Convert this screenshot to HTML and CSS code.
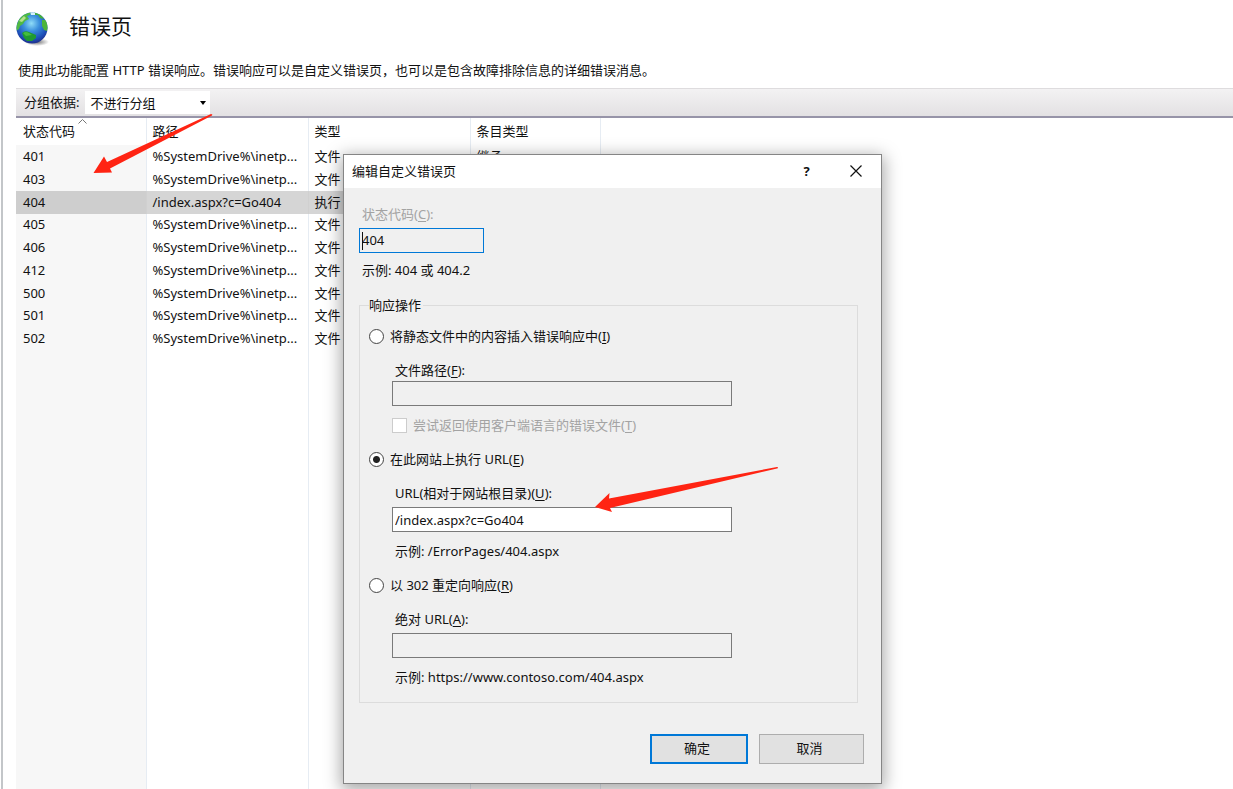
FILE: index.html
```html
<!DOCTYPE html>
<html lang="zh-CN">
<head>
  <meta charset="UTF-8">
  <meta name="viewport" content="width=device-width, initial-scale=1.0">
  <title>错误页</title>
  <link rel="stylesheet" href="styles.css">
</head>
<body>
  <main class="page">
    <header class="page-header">
      <svg class="globe" viewBox="0 0 34 36" aria-hidden="true">
        <defs>
          <radialGradient id="sea" cx="48%" cy="35%" r="65%">
            <stop offset="0" stop-color="#8fdcf7"/>
            <stop offset="0.4" stop-color="#3a8fdd"/>
            <stop offset="0.8" stop-color="#1c4fb8"/>
            <stop offset="1" stop-color="#20308c"/>
          </radialGradient>
          <radialGradient id="shade">
            <stop offset="0" stop-color="#777"/>
            <stop offset="1" stop-color="#777" stop-opacity="0"/>
          </radialGradient>
          <clipPath id="ball"><circle cx="16" cy="17" r="15.5"/></clipPath>
        </defs>
        <ellipse cx="21" cy="31" rx="12" ry="4" fill="url(#shade)"/>
        <circle cx="16" cy="17" r="15.5" fill="url(#sea)"/>
        <g clip-path="url(#ball)">
          <path d="M0 16 L3 8 Q8 2 15 1 L14 4 L11 5 L13 8 L9 10 L7 13 L4 15 L3 18 L0 20Z" fill="#4fb944"/>
          <path d="M3 10 L8 5 L10 7 L6 11Z" fill="#b5e08a"/>
          <path d="M18 1 L25 3 L28 8 L24 7 L22 4 L18 4Z" fill="#45ae3c"/>
          <path d="M26 9 L30 9 L33 15 L31 20 L28 19 L26 15Z" fill="#4db53b"/>
          <path d="M6 22 Q9 19 13 21 L20 24 L20 27 L16 30 L11 30 L8 27Z" fill="#1f9a31"/>
          <path d="M7 22 Q10 20 13 22 L16 24 L10 25Z" fill="#46bd3f"/>
          <path d="M14 0 h5 v4 h-4z" fill="#d5f0fb"/>
        </g>
      </svg>
      <h1>错误页</h1>
    </header>
    <p class="description">使用此功能配置 HTTP 错误响应。错误响应可以是自定义错误页，也可以是包含故障排除信息的详细错误消息。</p>

    <div class="toolbar">
      <label for="groupBy">分组依据:</label>
      <select id="groupBy">
        <option>不进行分组</option>
      </select>
    </div>

    <table class="error-list">
      <thead>
        <tr>
          <th>状态代码
            <svg class="sort-mark" viewBox="0 0 9 5" aria-hidden="true"><path d="M0.5 4.5 L4.5 0.5 L8.5 4.5" fill="none" stroke="#777"/></svg>
          </th>
          <th>路径</th>
          <th>类型</th>
          <th>条目类型</th>
          <th></th>
        </tr>
      </thead>
      <tbody>
        <tr><td>401</td><td>%SystemDrive%\inetp...</td><td>文件</td><td>继承</td><td></td></tr>
        <tr><td>403</td><td>%SystemDrive%\inetp...</td><td>文件</td><td></td><td></td></tr>
        <tr class="selected"><td>404</td><td>/index.aspx?c=Go404</td><td>执行</td><td></td><td></td></tr>
        <tr><td>405</td><td>%SystemDrive%\inetp...</td><td>文件</td><td></td><td></td></tr>
        <tr><td>406</td><td>%SystemDrive%\inetp...</td><td>文件</td><td></td><td></td></tr>
        <tr><td>412</td><td>%SystemDrive%\inetp...</td><td>文件</td><td></td><td></td></tr>
        <tr><td>500</td><td>%SystemDrive%\inetp...</td><td>文件</td><td></td><td></td></tr>
        <tr><td>501</td><td>%SystemDrive%\inetp...</td><td>文件</td><td></td><td></td></tr>
        <tr><td>502</td><td>%SystemDrive%\inetp...</td><td>文件</td><td></td><td></td></tr>
        <tr class="filler"><td></td><td></td><td></td><td></td><td></td></tr>
      </tbody>
    </table>
  </main>

  <form class="dialog" role="dialog" aria-labelledby="dialogTitle">
    <div class="title-bar">
      <h2 id="dialogTitle">编辑自定义错误页</h2>
      <button type="button" class="title-button" aria-label="帮助">?</button>
      <button type="button" class="title-button" aria-label="关闭">
        <svg viewBox="0 0 12 12" aria-hidden="true"><path d="M0.5 0.5 L11.5 11.5 M11.5 0.5 L0.5 11.5" stroke="#111" stroke-width="1.2"/></svg>
      </button>
    </div>

    <div class="dialog-body">
      <div class="status">
        <label class="disabled" for="statusCode">状态代码(<u>C</u>):</label>
        <input type="text" id="statusCode" value="404" readonly>
        <p>示例: 404 或 404.2</p>
      </div>

      <fieldset>
        <legend>响应操作</legend>

        <div class="option">
          <label class="choice"><input type="radio" name="action"><span>将静态文件中的内容插入错误响应中(<u>I</u>)</span></label>
          <div class="field field-file">
            <label for="filePath">文件路径(<u>F</u>):</label>
            <input type="text" id="filePath" disabled>
            <label class="choice disabled"><input type="checkbox" disabled><span>尝试返回使用客户端语言的错误文件(<u>T</u>)</span></label>
          </div>
        </div>

        <div class="option">
          <label class="choice"><input type="radio" name="action" checked><span>在此网站上执行 URL(<u>E</u>)</span></label>
          <div class="field">
            <label for="siteUrl">URL(相对于网站根目录)(<u>U</u>):</label>
            <input type="text" id="siteUrl" value="/index.aspx?c=Go404">
            <p>示例: /ErrorPages/404.aspx</p>
          </div>
        </div>

        <div class="option">
          <label class="choice"><input type="radio" name="action"><span>以 302 重定向响应(<u>R</u>)</span></label>
          <div class="field">
            <label for="absUrl">绝对 URL(<u>A</u>):</label>
            <input type="text" id="absUrl" disabled>
            <p>示例: https://www.contoso.com/404.aspx</p>
          </div>
        </div>
      </fieldset>

      <div class="actions">
        <button type="submit" class="ok">确定</button>
        <button type="button" class="cancel">取消</button>
      </div>
    </div>
  </form>

  <svg class="arrow arrow-list" viewBox="0 0 120 60" aria-hidden="true">
    <path d="M0.5 60 L11 43.5 L14 49 L118 1 Q120 1 119 2.5 L17 55.5 L19 59.5Z" fill="#ff2413"/>
  </svg>
  <svg class="arrow arrow-url" viewBox="0 0 184 46" aria-hidden="true">
    <path d="M0 41 L14.5 27 L14 32.5 L182 1 Q184 1.5 182 2.5 L15 42 L17 46Z" fill="#ff2413"/>
  </svg>
</body>
</html>
```

FILE: styles.css
```css
* {
  box-sizing: border-box;
}

body {
  margin: 0;
  min-height: 100vh;
  overflow: hidden;
  background-color: white;
  color: #111;
  font-family: "Noto Sans", "Noto Sans CJK SC", sans-serif;
  font-size: 13px;
  line-height: 18px;
}

h1, h2, p {
  margin: 0;
  font-weight: normal;
}

input, select, button {
  font: inherit;
  color: inherit;
}

/* 主页面 */
.page {
  min-height: 100vh;
  margin-left: 1px;
  padding-left: 13px;
  border-left: 2px solid #c3c6c9;
}

.page-header {
  display: flex;
  align-items: center;
  gap: 19px;
  height: 54px;
}

.globe {
  width: 34px;
  height: 36px;
  margin-top: 4px;
}

.page-header h1 {
  padding-bottom: 2px;
  font-size: 21px;
  line-height: 30px;
}

.description {
  padding: 7px 2px 9px;
}

.toolbar {
  display: flex;
  align-items: center;
  height: 30px;
  padding-left: 8px;
  border-top: 1px solid #dedcde;
  border-bottom: 2px solid #9794a8;
  background: linear-gradient(#f3f2f3, #e3e1e3);
}

.toolbar label {
  padding-bottom: 1px;
}

.toolbar select {
  width: 125px;
  height: 23px;
  margin-left: 6px;
  padding: 0 5px;
  border: none;
  border-radius: 0;
  appearance: none;
  background: white url("data:image/svg+xml,%3Csvg xmlns='http://www.w3.org/2000/svg' width='6' height='4'%3E%3Cpath d='M0 0h6L3 4z'/%3E%3C/svg%3E") no-repeat right 4px center;
}

.error-list {
  width: 100%;
  height: calc(100vh - 118px);
  table-layout: fixed;
  border-collapse: collapse;
}

.error-list th,
.error-list td {
  padding: 0 6px 2px;
  border-right: 1px solid #e6ecf3;
  font-weight: normal;
  text-align: left;
  white-space: nowrap;
  overflow: hidden;
}

.error-list th {
  position: relative;
  width: 162px;
  height: 27px;
}

.error-list th:first-child,
.error-list th:nth-child(4) {
  width: 130px;
}

.error-list th:last-child {
  width: auto;
}

.error-list th:first-child,
.error-list td:first-child {
  padding-left: 7px;
}

.error-list th:last-child,
.error-list td:last-child {
  border-right: none;
}

.error-list td {
  height: 23px;
}

.error-list tr:nth-child(4n) td {
  height: 22px;
}

.error-list td:first-child {
  background-color: #f7f7f7;
}

.error-list .selected td:not(:last-child) {
  border-color: #d0d0d0;
  background-color: #d5d5d5;
}

.error-list .selected td:first-child {
  background-color: #cecece;
}

.error-list .filler td {
  height: auto;
}

.sort-mark {
  position: absolute;
  top: 1px;
  left: 62px;
  width: 9px;
  height: 5px;
}

/* 对话框 */
.dialog {
  position: absolute;
  top: 154px;
  left: 343px;
  width: 539px;
  border: 1px solid #858585;
  background-color: #f0f0f0;
  box-shadow: 0 4px 16px 2px rgba(0, 0, 0, 0.35);
}

.title-bar {
  display: flex;
  align-items: center;
  height: 33px;
  padding: 0 1px 2px 8px;
  background-color: white;
}

.title-bar h2 {
  flex: 1;
  font-size: 13px;
}

.title-button {
  width: 49px;
  height: 30px;
  padding: 0;
  border: none;
  background: none;
  font-weight: bold;
}

.title-button svg {
  display: block;
  width: 12px;
  height: 12px;
  margin: 0 auto;
}

.dialog-body {
  padding: 17px 17px 19px 15px;
}

.disabled {
  color: #a3a3a3;
}

.status label,
.status p {
  display: block;
  padding-left: 3px;
}

.dialog input[type="text"] {
  display: block;
  width: 340px;
  height: 25px;
  padding: 0 2px;
  border: 1px solid #7a7a7a;
  background-color: white;
}

.dialog input[type="text"]:disabled {
  background-color: #f0f0f0;
}

.dialog .status input[type="text"] {
  width: 125px;
  margin: 5px 0 8px;
  padding-bottom: 2px;
  border-color: #0078d7;
  outline: none;
  background: #f0f0f0 linear-gradient(#111, #111) no-repeat 2px center / 1px 18px;
}

fieldset {
  margin: 17px 6px 0 0;
  padding: 13px 9px 16px;
  border: 1px solid #dcdcdc;
}

legend {
  padding: 0 2px 0 0;
}

.option + .option {
  margin-top: 16px;
}

.choice {
  display: flex;
  align-items: center;
  gap: 6px;
}

.dialog u {
  text-underline-offset: 2px;
}

.choice input {
  width: 15px;
  height: 15px;
  margin: 0;
  border: 1px solid #444;
  appearance: none;
  background-color: white;
}

.choice input[type="radio"] {
  border-radius: 50%;
}

.choice input[type="radio"]:checked {
  background: radial-gradient(circle, #222 3px, white 4px);
}

.choice input[type="checkbox"] {
  border-color: #ccc;
}

.field {
  margin: 16px 0 0 23px;
}

.field > label:first-child,
.field p {
  display: block;
  padding-left: 3px;
}

.field input[type="text"] {
  margin: 5px 0 10px;
}

.field-file input[type="text"] {
  margin-top: 2px;
}

.actions {
  display: flex;
  justify-content: flex-end;
  gap: 11px;
  margin-top: 31px;
}

.actions button {
  height: 30px;
  padding: 0 4px 2px 0;
  border: 1px solid #adadad;
  background-color: #e1e1e1;
}

.actions .ok {
  width: 98px;
  border: 2px solid #0078d7;
}

.actions .cancel {
  width: 105px;
}

/* 标注箭头 */
.arrow {
  position: absolute;
  pointer-events: none;
}

.arrow-list {
  top: 113px;
  left: 93px;
  width: 120px;
  height: 60px;
}

.arrow-url {
  top: 466px;
  left: 595px;
  width: 184px;
  height: 46px;
}
```
